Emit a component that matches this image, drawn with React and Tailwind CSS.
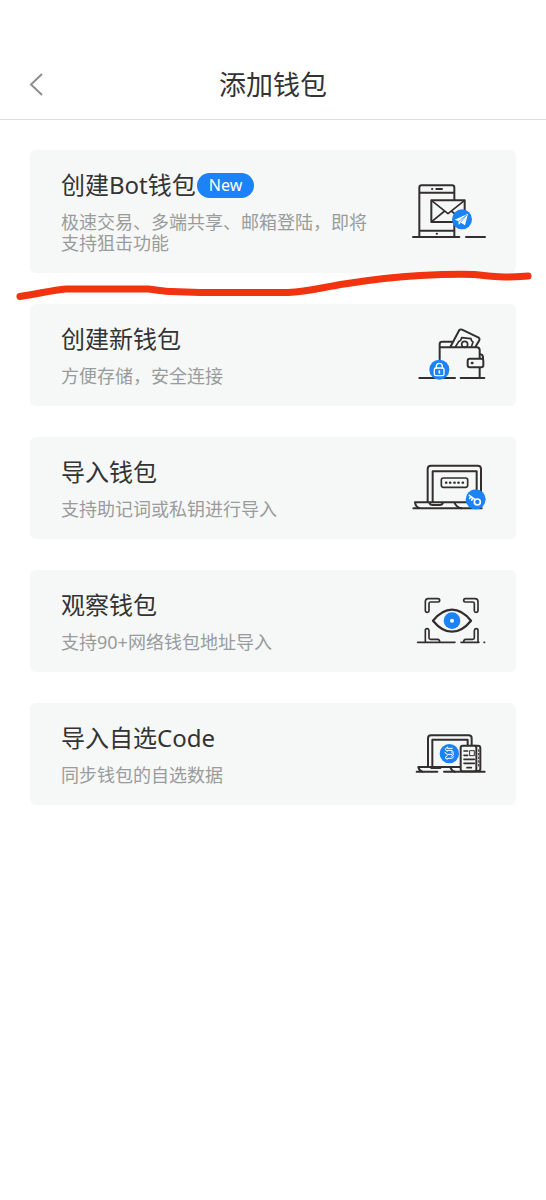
import React from 'react';

const BLUE = '#1b82f8';
const INK = '#332f2f';

const wallets = [
  { id: 'bot', title: '创建Bot钱包', desc: '极速交易、多端共享、邮箱登陆，即将支持狙击功能', icon: BotIcon, isNew: true },
  { id: 'create', title: '创建新钱包', desc: '方便存储，安全连接', icon: WalletIcon },
  { id: 'import', title: '导入钱包', desc: '支持助记词或私钥进行导入', icon: LaptopKeyIcon },
  { id: 'watch', title: '观察钱包', desc: '支持90+网络钱包地址导入', icon: EyeIcon },
  { id: 'code', title: '导入自选Code', desc: '同步钱包的自选数据', icon: SyncIcon },
];

function App() {
  return (
    <div className="min-h-screen bg-white font-['Noto_Sans','Noto_Sans_CJK_SC',sans-serif] text-[#333333]">
      <header className="grid grid-cols-[1fr_auto_1fr] items-center border-b border-[#dfdfdf] px-7 pt-[50px] h-[120px]">
        <button type="button" aria-label="返回" className="justify-self-start">
          <svg className="h-6 w-4" viewBox="0 0 16 24" fill="none" stroke="#8f8f8f" strokeWidth="2">
            <path d="M14 1 3 11.500l11 10.500" />
          </svg>
        </button>
        <h1 className="text-[27px] leading-8">添加钱包</h1>
      </header>

      <main className="relative flex flex-col gap-[31px] px-[30px] py-[30px]">
        {wallets.map(w => (
          <WalletCard key={w.id} title={w.title} desc={w.desc} icon={w.icon} isNew={w.isNew} />
        ))}

        {/* Hand-drawn marker under the first card */}
        <svg className="pointer-events-none absolute inset-x-0 top-[145px] w-full" viewBox="0 265 546 40" fill="none" aria-hidden="true">
          <path
            d="M20 296.500C38 294 52 290 66 289H148C158 290 164 291.500 172 291.500L200 292.500H288C308 292 324 287 344 284C366 280.500 392 277 420 275.500C440 274.500 456 274 474 274.500C484 275.500 494 277 504 277C514 277 520 276.500 528 276"
            stroke="#f1340f"
            strokeWidth="7"
            strokeLinecap="round"
            strokeLinejoin="round"
          />
        </svg>
      </main>
    </div>
  );
}

function WalletCard({ title, desc, icon: Icon, isNew }) {
  return (
    <button type="button" className="flex w-full items-center gap-9 rounded-md bg-[#f6f7f7] py-[19px] pr-7 pl-[31px] text-left">
      <span className="flex min-w-0 flex-1 flex-col gap-[11px]">
        <span className="flex items-center gap-px text-2xl leading-8">
          {title}
          {isNew && <span className="rounded-full bg-[#1b82f8] px-3 text-base leading-[25px] text-white">New</span>}
        </span>
        <span className="text-lg leading-[21px] text-[#999c9c]">{desc}</span>
      </span>
      <Icon />
    </button>
  );
}

function IconFrame({ viewBox, children }) {
  return (
    <svg
      className="h-16 w-[76px] shrink-0"
      viewBox={viewBox}
      fill="none"
      stroke={INK}
      strokeWidth="6"
      strokeLinecap="round"
      strokeLinejoin="round"
      aria-hidden="true"
    >
      {children}
    </svg>
  );
}

function BotIcon() {
  return (
    <IconFrame viewBox="36 31 228 192">
      <path d="M58 202V54a7 7 0 0 1 7-7h91a7 7 0 0 1 7 7v38M163 158v44M58 69h105M58 183h105" />
      <path d="M96 58h1M109 58h17M110 192h1" />
      <path d="M39 202h139M198 202h57" />
      <rect x="94" y="92" width="100" height="65" fill="#f6f7f7" />
      <path d="M95 93l49 39 49-39M96 155l38-31M192 155l-38-31" strokeWidth="5" />
      <circle cx="186" cy="149" r="30" fill={BLUE} stroke="none" />
      <path d="M164 150 204 132 195 167 183 159 176 165 175 154z" fill="#fff" stroke="none" />
      <path d="M176 155 200 136 182 158" stroke={BLUE} strokeWidth="2" />
    </IconFrame>
  );
}

function WalletIcon() {
  return (
    <IconFrame viewBox="36 27 228 192">
      <path d="M119 136V90q0-7 8-7h29M119 100h111q9 0 9 9v24M239 160v32" />
      <path d="M151 99 178 48q3-3 8-1l50 24q4 3 2 8l-12 20" />
      <path d="M166 99l10-16q7-2 9-12l28 3q0 6 6 10l-5 15" strokeWidth="5" />
      <circle cx="194" cy="91" r="9" strokeWidth="5" />
      <path d="M241 121q8 1 8 9v4" />
      <rect x="203" y="134" width="47" height="26" rx="6" fill="#f6f7f7" />
      <path d="M216 147h1" strokeWidth="8" />
      <path d="M58 192h107M182 192h71" />
      <circle cx="118" cy="167" r="30" fill={BLUE} stroke="none" />
      <g stroke="#fff" strokeWidth="4">
        <rect x="103" y="162" width="29" height="23" rx="5" />
        <path d="M109 162v-5a9 9 0 0 1 18 0v5" />
        <path d="M118 171v6" strokeWidth="5" />
      </g>
    </IconFrame>
  );
}

function LaptopKeyIcon() {
  return (
    <IconFrame viewBox="36 18 228 192">
      <path d="M83 156V57q0-10 10-10h140q10 0 10 10v68M98 156V64h132v56" />
      <rect x="124" y="84" width="79" height="28" rx="6" strokeWidth="5" />
      <path d="M138 98h1M150 98h1M163 98h1M175 98h1M188 98h1" strokeWidth="7" />
      <path d="M45 157h155M45 157q2 14 13 17M88 158q2 7 10 7h21q8 0 10-7M163 158q7 15 21 17" />
      <path d="M40 175h205" />
      <circle cx="227" cy="148" r="30" fill={BLUE} stroke="none" />
      <g stroke="#fff" strokeWidth="5">
        <circle cx="232" cy="156" r="9" />
        <path d="M225 149 208 136M212 140l-3 5M218 145l-3 5" />
      </g>
    </IconFrame>
  );
}

function EyeIcon() {
  return (
    <IconFrame viewBox="36 27 228 192">
      <g strokeWidth="5">
        <path d="M76 93V65q0-9 9-9h29q5 0 5 5t-5 5H92q-5 0-5 5v22q0 4-5 4t-6-4z" />
        <path d="M234 93V65q0-9-9-9h-29q-5 0-5 5t5 5h22q5 0 5 5v22q0 4 5 4t6-4z" />
        <path d="M76 186v-35q0-5 5-5t6 5v23q0 4 5 4h21q6 0 6 8" />
        <path d="M234 186v-35q0-5-5-5t-6 5v23q0 4-5 4h-21q-6 0-6 8" />
      </g>
      <path d="M53 187h112M183 187h54M252 187h2" strokeWidth="5" />
      <path d="M99 122q27-33 57-33t57 33q-27 33-57 33t-57-33z" strokeWidth="7" />
      <circle cx="156" cy="122" r="25" fill={BLUE} stroke="none" />
      <circle cx="156" cy="122" r="6" fill="#fff" stroke="none" />
    </IconFrame>
  );
}

function SyncIcon() {
  return (
    <IconFrame viewBox="36 21 228 192">
      <path d="M84 154V70q0-9 9-9h113q9 0 9 9v21M97 154V74h106v16" />
      <path d="M55 156h125M55 156q2 11 12 14M151 157q5 12 14 13" />
      <path d="M94 159h27" />
      <path d="M50 170h62M132 170h122" />
      <circle cx="148" cy="116" r="29" fill={BLUE} stroke="none" />
      <g stroke="#fff" strokeWidth="3">
        <path d="M142 97l-7 6 7 6v-3h11q6 0 7 6M142 97v3h15M135 112q1 6 8 6h13" />
        <path d="M154 111l8 7-8 6M142 122l-7 6 7 5v-3h12q6 0 6-5" />
      </g>
      <path d="M222 92h12q7 0 7 7v62q0 7-7 7h-12" />
      <path d="M236 104v52" strokeWidth="3" strokeDasharray="5 6" />
      <rect x="182" y="92" width="47" height="77" rx="6" fill="#f6f7f7" />
      <path d="M192 108h11M192 121h11M192 133h31M192 145h31M201 158h13" strokeWidth="5" />
      <rect x="210" y="107" width="13" height="15" strokeWidth="3" />
    </IconFrame>
  );
}

export default App;
